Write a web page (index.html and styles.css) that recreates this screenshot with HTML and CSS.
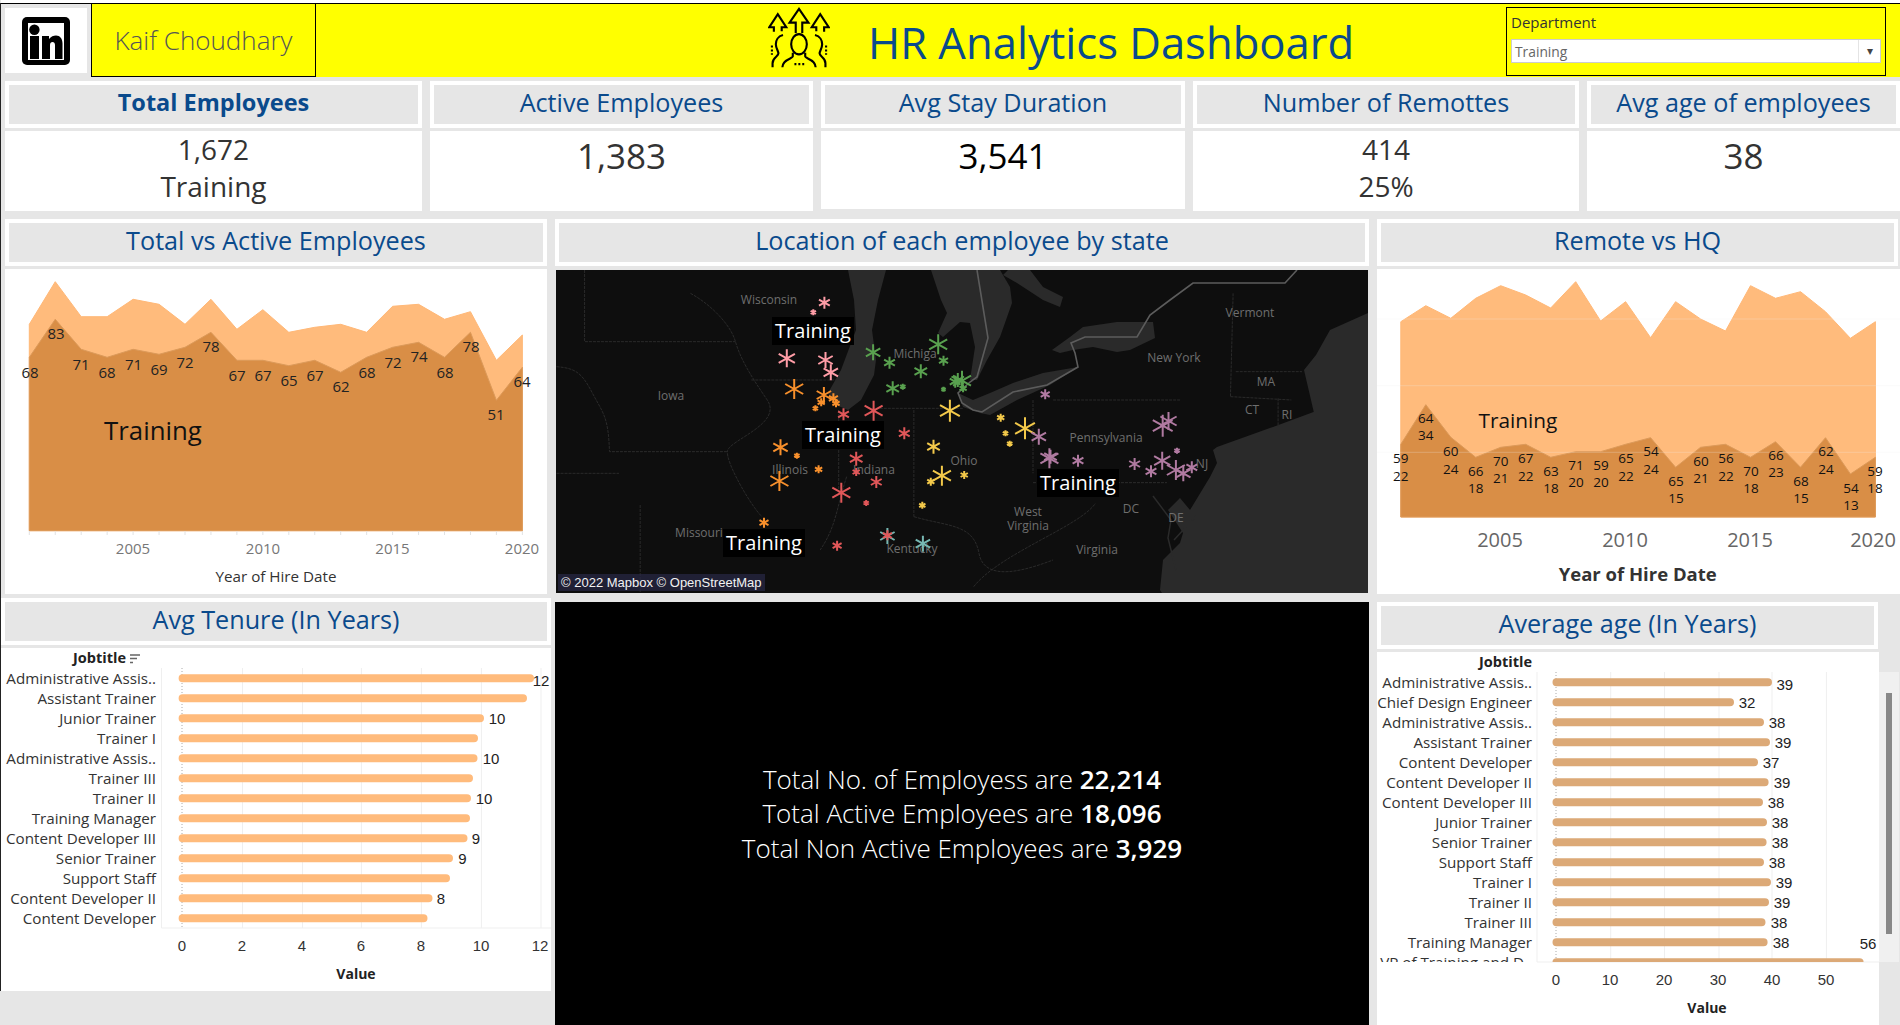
FILE: index.html
```html
<!DOCTYPE html>
<html lang="en">
<head>
<meta charset="utf-8">
<title>HR Analytics Dashboard</title>
<link rel="stylesheet" href="styles.css">
</head>
<body>
<div class="dash">
  <header class="top">
    <div class="logo-cell">
      <div class="logo-box">
        <svg class="logo" viewBox="0 0 48 48" aria-label="LinkedIn">
          <rect width="48" height="48" rx="5" fill="#000"/>
          <rect x="6" y="6" width="36" height="37" fill="#fff"/>
          <circle cx="12.4" cy="12.8" r="5.2" fill="#000"/>
          <rect x="8" y="19" width="9" height="23" fill="#000"/>
          <path d="M20 19h7v3c2-2.500 4.500-3.500 7-3.500 4 0 6.500 3 6.500 8V42H33V28c0-2-1-3-2.500-3S28 26 28 28v14h-8z" fill="#000"/>
        </svg>
      </div>
    </div>
    <div class="author">Kaif Choudhary</div>
    <div class="banner">
      <svg class="hr-icon" viewBox="50 20 190 190" aria-hidden="true">
        <g fill="none" stroke="#000" stroke-width="6.500" stroke-linejoin="miter">
          <path d="M135 100V68h-19l29-42 29 42h-19v32"/>
          <path d="M68 96V82H54l26-40 26 40H92v12"/>
          <path d="M222 96V82h14l-26-40-26 40h14v12"/>
          <ellipse cx="145" cy="134" rx="24" ry="31"/>
          <path d="M126 160v12c0 6-32 8-32 33"/>
          <path d="M164 160v12c0 6 32 8 32 33"/>
          <path d="M96 106c-16 4-22 18-22 28 0 12 8 22 8 28 0 10-18 12-18 30v13"/>
          <path d="M194 106c16 4 22 18 22 28 0 12-8 22-8 28 0 10 18 12 18 30v13"/>
          <path d="M62 138v28M228 138v28" stroke-dasharray="6 6"/>
          <path d="M131 195h30" stroke-dasharray="6 6"/>
        </g>
      </svg>
      <h1 class="main-title">HR Analytics Dashboard</h1>
      <div class="filter">
        <div class="filter-label">Department</div>
        <div class="select"><span class="select-value">Training</span><span class="select-arrow">▾</span></div>
      </div>
    </div>
  </header>

  <section class="kpis">
    <div class="kpi">
      <div class="head"><h2 class="head-in strong">Total Employees</h2></div>
      <div class="kpi-val two"><span>1,672</span><span>Training</span></div>
    </div>
    <div class="kpi">
      <div class="head"><h2 class="head-in">Active Employees</h2></div>
      <div class="kpi-val one">1,383</div>
    </div>
    <div class="kpi">
      <div class="head"><h2 class="head-in">Avg Stay Duration</h2></div>
      <div class="kpi-val one black short">3,541</div>
    </div>
    <div class="kpi">
      <div class="head"><h2 class="head-in">Number of Remottes</h2></div>
      <div class="kpi-val two"><span>414</span><span>25%</span></div>
    </div>
    <div class="kpi">
      <div class="head"><h2 class="head-in">Avg age of employees</h2></div>
      <div class="kpi-val one">38</div>
    </div>
  </section>

  <section class="row-charts">
    <div class="col">
      <div class="head"><h2 class="head-in">Total vs Active Employees</h2></div>
      <div class="panel">
        <svg class="chart" viewBox="0 0 542 325">
          <polygon fill="#ffbb7c" stroke="#ffb877" points="24.300,261.700 24.300,55.300 50.250,12.700 76.200,47.700 102.150,47.700 128.100,30.300 154.050,35.300 180,55.300 205.950,30.300 231.900,60.300 257.850,40.700 283.800,63.300 309.750,58.300 335.700,55.300 361.650,63.300 387.600,37.300 413.550,35.300 439.500,50.300 465.450,42.700 491.400,91.300 517.350,66 517.350,261.700"/>
          <polygon fill="#d98e46" stroke="#dc9a5a" points="24.300,261.700 24.300,88.300 50.250,50.300 76.200,80.300 102.150,88.300 128.100,80.300 154.050,85.300 180,78.300 205.950,63.300 231.900,91.300 257.850,91.300 283.800,96.700 309.750,91.300 335.700,103.300 361.650,88.300 387.600,78.300 413.550,73.300 439.500,88.300 465.450,63.300 491.400,131.300 517.350,98.300 517.350,261.700"/>
          <path class="ticks" d="M24.300 262v4M50.250 262v4M76.200 262v4M102.150 262v4M128.100 262v4M154.050 262v4M180 262v4M205.950 262v4M231.900 262v4M257.850 262v4M283.800 262v4M309.750 262v4M335.700 262v4M361.650 262v4M387.600 262v4M413.550 262v4M439.500 262v4M465.450 262v4M491.400 262v4M517.350 262v4"/>
          <g class="lbl-a">
            <text x="25" y="108.700">68</text><text x="51" y="70.300">83</text><text x="76" y="100.700">71</text><text x="102" y="108.700">68</text><text x="128.600" y="100.700">71</text><text x="154" y="105.700">69</text><text x="180" y="98.700">72</text><text x="206" y="83.300">78</text><text x="232" y="111.700">67</text><text x="258" y="111.700">67</text><text x="284" y="116.700">65</text><text x="310" y="111.700">67</text><text x="336" y="123.300">62</text><text x="362" y="108.700">68</text><text x="388" y="98.700">72</text><text x="414" y="93.300">74</text><text x="440" y="108.700">68</text><text x="466" y="83.300">78</text><text x="491" y="151.300">51</text><text x="517" y="118.300">64</text>
          </g>
          <text class="tag-a" x="148" y="171">Training</text>
          <g class="axis-a">
            <text x="128" y="285">2005</text><text x="258" y="285">2010</text><text x="387.500" y="285">2015</text><text x="517" y="285">2020</text>
          </g>
          <text class="axis-t-a" x="271" y="312.500">Year of Hire Date</text>
        </svg>
      </div>
    </div>

    <div class="col">
      <div class="head"><h2 class="head-in">Location of each employee by state</h2></div>
      <div class="panel map-panel">
        <div class="map">
          <svg class="chart" viewBox="0 0 812 323">
            <defs>
              <path id="m" class="star" d="M0-1V1M-.9-.5L.9.500M-.9.500L.9-.5"/>
            </defs>
            <rect width="812" height="323" fill="#0e0e0e"/>
            <g fill="#2a2a2a">
              <path d="M292 0L298 30 300 60 285 100 272 123 280 135 292 140 305 130 318 105 320 90 316 60 322 30 330 0z"/>
              <path d="M375 0L385 30 391 43 382 63 387 67 404 52 414 53 419 77 414 110 421 110 431 90 444 67 456 33 454 17 444 0z"/>
              <path d="M447 5L461 13 487 30 504 37 507 27 487 17 474 0 452 0z"/>
              <path d="M402 123L407 137 424 143 434 145 461 130 494 115 522 97 487 103 457 113 434 123 417 130z"/>
              <path d="M496 80L514 67 527 57 561 52 597 52 599 68 574 80 561 82 537 77 517 80 504 83z"/>
              <path d="M812 43L774 60 760 85 748 100 755 130 758 143 771 137 717 157 661 177 657 180 661 193 654 207 634 240 624 228 612 240 627 263 624 273 607 290 604 320 606 323 812 323z"/>
            </g>
            <path class="border" d="M421 0L432 68 421 107 414 112 402 123 406 133 417 140 426 142 457 122 491 115 522 97 519 83 515 73 529 67 581 67 594 45 614 30 637 13 729 13 741 0"/>
            <g transform="scale(.5294 .3333) translate(-11 -30)" class="states">
              <path d="M65 30V245H350M380 360H540M12 320C50 325 60 340 80 400S110 470 112 575H335M545 450V700M600 445H780M687 450V770M912 420V640M950 420H1190M912 668H1165M1290 100L1285 410M1295 335H1420M1285 410L1400 420M1375 415V500M170 735V1000M12 640H130"/>
              <path d="M265 100C300 130 340 190 350 245S380 350 410 420 340 540 335 572 380 740 400 770M560 650C540 750 540 800 510 870M687 770C750 800 800 790 810 880S900 930 950 900M800 980C850 880 1000 800 1030 730"/>
            </g>
            <path class="river" d="M597 226L615 250 612 268 620 300M640 246L618 270"/>
            <g class="place">
              <text x="213" y="34">Wisconsin</text><text x="115" y="130">Iowa</text><text x="359" y="88">Michiga</text><text x="694" y="47">Vermont</text><text x="618" y="92">New York</text><text x="710" y="116">MA</text><text x="696" y="144">CT</text><text x="731" y="149">RI</text><text x="646" y="198">NJ</text><text x="550" y="172">Pennsylvania</text><text x="408" y="195">Ohio</text><text x="234" y="204">Illinois</text><text x="318" y="204">Indiana</text><text x="143" y="267">Missouri</text><text x="472" y="246">West</text><text x="472" y="260">Virginia</text><text x="575" y="243">DC</text><text x="620" y="252">DE</text><text x="541" y="284">Virginia</text><text x="356" y="283">Kentucky</text>
            </g>
            <g class="pink">
              <use href="#m" transform="translate(268.400 32.700) scale(6)"/><use href="#m" transform="translate(257.300 42.300) scale(3)"/><use href="#m" transform="translate(230.800 88.300) scale(9)"/><use href="#m" transform="translate(269.500 90) scale(8)"/><use href="#m" transform="translate(274.800 102.300) scale(8)"/>
            </g>
            <g class="orange">
              <use href="#m" transform="translate(238.200 119) scale(10)"/><use href="#m" transform="translate(267.900 125) scale(8)"/><use href="#m" transform="translate(277.400 128.300) scale(5)"/><use href="#m" transform="translate(280 133.300) scale(4)"/><use href="#m" transform="translate(265.200 132.300) scale(4)"/><use href="#m" transform="translate(259.400 138.300) scale(3)"/><use href="#m" transform="translate(224.500 177.300) scale(8)"/><use href="#m" transform="translate(240.900 185.700) scale(3)"/><use href="#m" transform="translate(262.600 199.300) scale(4)"/><use href="#m" transform="translate(223.400 211) scale(10)"/><use href="#m" transform="translate(208 252.700) scale(5)"/>
            </g>
            <g class="teal">
              <use href="#m" transform="translate(331.400 266) scale(8)"/><use href="#m" transform="translate(366.900 273.700) scale(8)"/>
            </g>
            <g class="red">
              <use href="#m" transform="translate(287.500 144.300) scale(6)"/><use href="#m" transform="translate(317.600 140.700) scale(10)"/><use href="#m" transform="translate(348.300 163.300) scale(6)"/><use href="#m" transform="translate(300.200 188.700) scale(7)"/><use href="#m" transform="translate(300.200 202) scale(4)"/><use href="#m" transform="translate(320.300 212) scale(6)"/><use href="#m" transform="translate(285.300 222.700) scale(10)"/><use href="#m" transform="translate(310.200 233) scale(3)"/><use href="#m" transform="translate(281.100 275.700) scale(5)"/><use href="#m" transform="translate(331.400 265.300) scale(5)"/>
            </g>
            <g class="green">
              <use href="#m" transform="translate(317.100 82.300) scale(8)"/><use href="#m" transform="translate(333.500 92.700) scale(6)"/><use href="#m" transform="translate(382.200 74.300) scale(10)"/><use href="#m" transform="translate(387.500 90.700) scale(5)"/><use href="#m" transform="translate(364.800 101.300) scale(7)"/><use href="#m" transform="translate(336.700 118.300) scale(7)"/><use href="#m" transform="translate(346.800 116.700) scale(3)"/><use href="#m" transform="translate(387.500 119.300) scale(2.500)"/><use href="#m" transform="translate(401.800 110) scale(7)"/><use href="#m" transform="translate(406 110.700) scale(10)"/><use href="#m" transform="translate(399.200 111.700) scale(6)"/><use href="#m" transform="translate(407.100 118.300) scale(4)"/>
            </g>
            <g class="yellow">
              <use href="#m" transform="translate(393.900 140.700) scale(11)"/><use href="#m" transform="translate(444.700 147.700) scale(4)"/><use href="#m" transform="translate(469 158.300) scale(11)"/><use href="#m" transform="translate(449.500 163.300) scale(3)"/><use href="#m" transform="translate(453.700 173.700) scale(3)"/><use href="#m" transform="translate(377.500 176.700) scale(7)"/><use href="#m" transform="translate(385.900 205.700) scale(10)"/><use href="#m" transform="translate(408.200 205) scale(4)"/><use href="#m" transform="translate(374.800 211.700) scale(4)"/><use href="#m" transform="translate(366.300 235.300) scale(3.500)"/>
            </g>
            <g class="purple">
              <use href="#m" transform="translate(489.200 124.300) scale(5)"/><use href="#m" transform="translate(482.800 166.700) scale(8)"/><use href="#m" transform="translate(493.400 188.300) scale(10)"/><use href="#m" transform="translate(494.500 186.700) scale(7)"/><use href="#m" transform="translate(522 190.700) scale(6)"/><use href="#m" transform="translate(612.500 151) scale(9)"/><use href="#m" transform="translate(606.700 155.700) scale(11)"/><use href="#m" transform="translate(621 180.700) scale(3)"/><use href="#m" transform="translate(578.600 194) scale(6)"/><use href="#m" transform="translate(606.200 190.700) scale(9)"/><use href="#m" transform="translate(595 201.300) scale(6)"/><use href="#m" transform="translate(619.900 200) scale(10)"/><use href="#m" transform="translate(627.300 203.300) scale(8)"/><use href="#m" transform="translate(635.800 197.300) scale(6)"/>
            </g>
            <g class="map-tag-bg">
              <rect x="216" y="47" width="82" height="28"/><rect x="246" y="151" width="82" height="28"/><rect x="481" y="199" width="82" height="28"/><rect x="167" y="259" width="82" height="28"/>
            </g>
            <g class="map-tag">
              <text x="257" y="67.500">Training</text><text x="287" y="171.500">Training</text><text x="522" y="219.500">Training</text><text x="208" y="279.500">Training</text>
            </g>
          </svg>
          <div class="credit">© 2022 Mapbox © OpenStreetMap</div>
        </div>
      </div>
    </div>

    <div class="col col-right">
      <div class="head"><h2 class="head-in">Remote vs HQ</h2></div>
      <div class="panel">
        <svg class="chart" viewBox="0 0 523 325">
          <polygon fill="#ffbb7c" stroke="#ffb877" points="23.800,248 23.800,52.700 48.800,36.700 73.800,49.300 98.700,29.300 123.700,16.700 148.700,26 173.700,39 198.700,12.700 223.600,52 248.600,32.700 273.600,68.700 298.600,32.700 323.600,50 348.500,62 373.500,16.700 398.500,29.300 423.500,22.700 448.500,42.700 473.400,69.300 498.400,52.700 498.400,248"/>
          <polygon fill="#d98e46" stroke="#dc9a5a" points="23.800,248 23.800,175.300 48.800,135.700 73.800,168.300 98.700,188.300 123.700,178.300 148.700,175.300 173.700,188.300 198.700,182.700 223.600,182.700 248.600,175.300 273.600,168.700 298.600,198.300 323.600,178.300 348.500,175.300 373.500,188.300 398.500,172.700 423.500,198.300 448.500,168.700 473.400,205 498.400,188.300 498.400,248"/>
          <path class="grid-r" d="M0 50H523M0 116.700H523M0 183.300H523"/>
          <g class="lbl-b">
            <text x="23.800" y="194.300">59</text><text x="23.800" y="211.700">22</text>
            <text x="48.800" y="154.300">64</text><text x="48.800" y="171.300">34</text>
            <text x="73.800" y="187.300">60</text><text x="73.800" y="204.700">24</text>
            <text x="98.800" y="207.300">66</text><text x="98.800" y="224.300">18</text>
            <text x="123.800" y="197.300">70</text><text x="123.800" y="214.300">21</text>
            <text x="148.800" y="194.300">67</text><text x="148.800" y="211.700">22</text>
            <text x="173.900" y="207.300">63</text><text x="173.900" y="224.300">18</text>
            <text x="198.900" y="201.300">71</text><text x="198.900" y="218.300">20</text>
            <text x="223.900" y="201.300">59</text><text x="223.900" y="218.300">20</text>
            <text x="248.900" y="194.300">65</text><text x="248.900" y="211.700">22</text>
            <text x="273.900" y="187.300">54</text><text x="273.900" y="204.700">24</text>
            <text x="299" y="217.300">65</text><text x="299" y="234.300">15</text>
            <text x="324" y="197.300">60</text><text x="324" y="214.300">21</text>
            <text x="349" y="194.300">56</text><text x="349" y="211.700">22</text>
            <text x="374" y="207.300">70</text><text x="374" y="224.300">18</text>
            <text x="399" y="191">66</text><text x="399" y="208.300">23</text>
            <text x="424" y="217.300">68</text><text x="424" y="234.300">15</text>
            <text x="449" y="187.300">62</text><text x="449" y="204.700">24</text>
            <text x="474" y="224.300">54</text><text x="474" y="241.300">13</text>
            <text x="498" y="207.300">59</text><text x="498" y="224.300">18</text>
          </g>
          <text class="tag-b" x="141" y="158.700">Training</text>
          <g class="axis-b">
            <text x="123" y="278">2005</text><text x="248" y="278">2010</text><text x="373" y="278">2015</text><text x="496" y="278">2020</text>
          </g>
          <text class="axis-t-b" x="260.700" y="312">Year of Hire Date</text>
        </svg>
      </div>
    </div>
  </section>

  <section class="row-bottom">
    <div class="col-left">
      <div class="head"><h2 class="head-in">Avg Tenure (In Years)</h2></div>
      <div class="bars-left">
        <svg class="chart" viewBox="0 0 550 343">
          <path class="plot" d="M160.500 20V280H550M241.500 20V280M301.500 20V280M360.400 20V280M420.400 20V280M480.400 20V280M540 20V280"/>
          <path class="zero" d="M181 20V280"/>
          <text class="bar-h" x="125" y="15">Jobtitle</text>
          <path class="sort" d="M129 7H139M129 10.500H136M129 14.500H132"/>
          <g class="bar-n">
            <text x="155" y="36.300">Administrative Assis..</text><text x="155" y="56.300">Assistant Trainer</text><text x="155" y="76.300">Junior Trainer</text><text x="155" y="96.300">Trainer I</text><text x="155" y="116.300">Administrative Assis..</text><text x="155" y="136.300">Trainer III</text><text x="155" y="156.300">Trainer II</text><text x="155" y="176.300">Training Manager</text><text x="155" y="196.300">Content Developer III</text><text x="155" y="216.300">Senior Trainer</text><text x="155" y="236.300">Support Staff</text><text x="155" y="256.300">Content Developer II</text><text x="155" y="276.300">Content Developer</text>
          </g>
          <g class="bar-l">
            <path d="M181.600 30.300H529M181.600 50.300H522M181.600 70.300H479M181.600 90.300H473M181.600 110.300H472.500M181.600 130.300H468M181.600 150.300H466M181.600 170.300H465M181.600 190.300H462.500M181.600 210.300H448M181.600 230.300H445M181.600 250.300H427.500M181.600 270.300H422.500"/>
          </g>
          <g class="num">
            <text x="540" y="38">12</text><text x="496" y="75.500">10</text><text x="490" y="115.500">10</text><text x="483" y="155.500">10</text><text x="475" y="195.500">9</text><text x="461.500" y="215.500">9</text><text x="440" y="255.500">8</text>
          </g>
          <g class="num tick">
            <text x="181" y="303">0</text><text x="241" y="303">2</text><text x="301" y="303">4</text><text x="360" y="303">6</text><text x="420" y="303">8</text><text x="480" y="303">10</text><text x="539" y="303">12</text>
          </g>
          <text class="bar-v" x="355" y="331">Value</text>
        </svg>
      </div>
    </div>

    <div class="note">
      <p class="note-line">Total No. of Employess are <b class="note-num">22,214</b></p>
      <p class="note-line">Total Active Employees are <b class="note-num">18,096</b></p>
      <p class="note-line">Total Non Active Employees are <b class="note-num">3,929</b></p>
    </div>

    <div class="col-age">
      <div class="head"><h2 class="head-in">Average age (In Years)</h2></div>
      <div class="bars-right">
        <svg class="chart" viewBox="0 0 502 373">
          <defs><clipPath id="plotclip"><rect width="520" height="310"/></clipPath></defs>
          <path class="plot" d="M160 20V310H502M233.700 20V310M287.500 20V310M342 20V310M395 20V310M449.400 20V310"/>
          <path class="zero" d="M179 20V310"/>
          <text class="bar-h" x="155" y="15">Jobtitle</text>
          <g clip-path="url(#plotclip)">
            <g class="bar-n">
              <text x="155" y="36.300">Administrative Assis..</text><text x="155" y="56.300">Chief Design Engineer</text><text x="155" y="76.300">Administrative Assis..</text><text x="155" y="96.300">Assistant Trainer</text><text x="155" y="116.300">Content Developer</text><text x="155" y="136.300">Content Developer II</text><text x="155" y="156.300">Content Developer III</text><text x="155" y="176.300">Junior Trainer</text><text x="155" y="196.300">Senior Trainer</text><text x="155" y="216.300">Support Staff</text><text x="155" y="236.300">Trainer I</text><text x="155" y="256.300">Trainer II</text><text x="155" y="276.300">Trainer III</text><text x="155" y="296.300">Training Manager</text><text x="155" y="316.300">VP of Training and D..</text>
            </g>
            <g class="bar-r">
              <path d="M179.500 30.300H391M179.500 50.300H353M179.500 70.300H383M179.500 90.300H389M179.500 110.300H377M179.500 130.300H387.600M179.500 150.300H382M179.500 170.300H386M179.500 190.300H385.600M179.500 210.300H383M179.500 230.300H390M179.500 250.300H388M179.500 270.300H384.500M179.500 290.300H386.600M179.500 310.300H482.600"/>
            </g>
          </g>
          <g class="num">
            <text x="407.800" y="37.500">39</text><text x="370" y="55.500">32</text><text x="400" y="75.500">38</text><text x="406" y="95.500">39</text><text x="394" y="115.500">37</text><text x="405" y="135.500">39</text><text x="399" y="155.500">38</text><text x="403" y="175.500">38</text><text x="403" y="195.500">38</text><text x="400" y="215.500">38</text><text x="407" y="235.500">39</text><text x="405" y="255.500">39</text><text x="402" y="275.500">38</text><text x="404" y="295.500">38</text><text x="491" y="296.500">56</text>
          </g>
          <g class="num tick">
            <text x="179" y="332.700">0</text><text x="233" y="332.700">10</text><text x="287" y="332.700">20</text><text x="341" y="332.700">30</text><text x="395" y="332.700">40</text><text x="449" y="332.700">50</text>
          </g>
          <text class="bar-v" x="330" y="360.700">Value</text>
        </svg>
        <div class="scroll"><div class="thumb"></div></div>
      </div>
    </div>
  </section>
</div>
</body>
</html>
```

FILE: styles.css
```css
* { box-sizing: border-box; }
html, body { margin: 0; padding: 0; }
body { background: #e6e6e6; font-family: "Open Sans", "Noto Sans", sans-serif; overflow: hidden; }

.dash { position: relative; width: 1900px; height: 1025px; padding-left: 1px; display: flex; flex-direction: column; overflow: hidden; }
.dash::before { content: ""; position: absolute; left: 0; top: 3px; width: 1px; height: 988px; background: #222; }

/* header */
.top { margin-top: 0; height: 77px; padding-top: 3px; background: #fff; display: flex; flex: none; position: relative; }
.top::after { content: ""; position: absolute; left: 0; right: 0; top: 3px; height: 1px; background: #000; }
.logo-cell { width: 90px; background: #e6e6e6; padding: 5px 4px 4px; }
.logo-box { height: 65px; width: 82px; background: #fff; display: flex; align-items: center; justify-content: center; }
.logo { width: 48px; height: 48px; display: block; }
.author { width: 225px; background: #ff0; border: 1px solid #000; display: flex; align-items: center; justify-content: center; font-size: 26px; font-weight: 300; color: #555; }
.banner { flex: 1; background: #ff0; display: flex; align-items: flex-start; padding-left: 452px; border-top: 1px solid #000; }
.hr-icon { width: 62px; height: 62px; flex: none; margin-top: 3px; display: block; }
.main-title { margin: 0 0 0 38px; font-size: 43.600px; font-weight: 400; line-height: 76px; height: 72px; color: #0a4a8c; white-space: nowrap; width: 520px; }
.filter { margin-left: 118px; margin-top: 3px; width: 380px; height: 69px; border: 1px solid #000; padding: 4px 4px 0; flex: none; }
.filter-label { font-size: 15px; line-height: 20px; color: #333; }
.select { margin-top: 7px; height: 24px; background: #fff; border: 1px solid #ccc; display: flex; align-items: center; justify-content: space-between; font-size: 13.800px; color: #666; }
.select-value { padding-left: 3px; }
.select-arrow { width: 22px; height: 100%; border-left: 1px solid #e4e4e4; text-align: center; color: #444; font-size: 12px; line-height: 22px; }

/* titles */
.head { height: 47px; background: #fff; padding: 4px; flex: none; }
.head-in { margin: 0; height: 100%; padding-bottom: 5px; background: #e6e6e6; display: flex; align-items: center; justify-content: center; font-size: 25.200px; font-weight: 400; color: #0a4a8c; white-space: nowrap; }
.strong { font-weight: 700; font-size: 23.500px; }

/* kpis */
.kpis { margin-top: 4px; padding-left: 4px; display: grid; grid-template-columns: 417px 383px 364px 386px 313px; column-gap: 8px; height: 130px; flex: none; }
.kpi { display: flex; flex-direction: column; gap: 3px; }
.kpi-val { flex: 1; background: #fff; color: #333; display: flex; flex-direction: column; align-items: center; }
.one { font-size: 35px; line-height: 36px; padding-top: 7px; }
.two { font-size: 28px; line-height: 36.500px; padding-top: 0; }
.black { color: #000; }
.short { margin-bottom: 2px; }

/* middle row */
.row-charts { margin-top: 8px; padding-left: 4px; display: grid; grid-template-columns: 542px 814px 523px; column-gap: 8px; height: 375px; flex: none; }
.col { display: flex; flex-direction: column; gap: 3px; min-width: 0; }
.col-right .head { margin-right: 2px; }
.panel { flex: 1; background: #fff; position: relative; min-height: 0; }
.map-panel { background: #e6e6e6; padding: 1px; }
.map { position: relative; height: 100%; background: #0e0e0e; overflow: hidden; }
.chart { display: block; width: 100%; height: 100%; overflow: hidden; font-family: "Open Sans", "Noto Sans", sans-serif; }
.credit { position: absolute; left: 2px; bottom: 2px; height: 17px; line-height: 17px; padding: 0 3px; background: rgba(40, 40, 70, .7); color: #f2f2f2; font-family: "Liberation Sans", Arial, sans-serif; font-size: 13px; white-space: nowrap; }

.ticks { stroke: #e2e2e2; fill: none; }
.lbl-a text { font-size: 15px; fill: #222; text-anchor: middle; }
.tag-a { font-size: 25.800px; fill: #111; text-anchor: middle; }
.axis-a text { font-size: 15px; fill: #777; text-anchor: middle; }
.axis-t-a { font-size: 15.200px; fill: #333; text-anchor: middle; }
.lbl-b text { font-size: 13.500px; fill: #111; text-anchor: middle; }
.tag-b { font-size: 20.800px; font-weight: 500; fill: #111; text-anchor: middle; }
.axis-b text { font-size: 20px; fill: #666; text-anchor: middle; }
.axis-t-b { font-size: 18.500px; font-weight: 700; fill: #333; text-anchor: middle; }
.grid-r { stroke: rgba(240, 240, 240, .25); fill: none; }

/* map */
.border { fill: none; stroke: #5c5c5c; stroke-width: 1.600; }
.states path { fill: none; stroke: #2a2a2a; stroke-dasharray: 3 1; vector-effect: non-scaling-stroke; }
.river { fill: none; stroke: #2a2a2a; stroke-width: 1.500; }
.place text { font-size: 12px; fill: #6e6e6e; text-anchor: middle; }
.star { fill: none; stroke-width: 2; stroke-linecap: butt; vector-effect: non-scaling-stroke; }
.pink { stroke: #ff9da7; }
.orange { stroke: #f8902c; }
.red { stroke: #e15759; }
.green { stroke: #59a14f; }
.yellow { stroke: #f3c94a; }
.purple { stroke: #b07aa1; }
.teal { stroke: #76b7b2; }
.map-tag-bg rect { fill: #000; }
.map-tag text { font-size: 20px; fill: #fff; text-anchor: middle; }

/* bottom row */
.row-bottom { margin-top: 4px; display: flex; flex: 1; min-height: 0; }
.col-left { width: 550px; display: flex; flex-direction: column; gap: 3px; flex: none; }
.bars-left { height: 343px; background: #fff; }
.note { width: 814px; margin: 4px 8px 0 4px; flex: none; background: #000; color: #fff; display: flex; flex-direction: column; align-items: center; justify-content: center; }
.note-line { margin: 0; font-size: 26px; line-height: 34.500px; font-weight: 300; white-space: nowrap; }
.note-num { font-weight: 600; }
.col-age { width: 502px; margin-top: 4px; display: flex; flex-direction: column; gap: 3px; flex: none; }
.col-age .head { margin-right: 1px; }
.bars-right { flex: 1; background: #fff; position: relative; }
.scroll { position: absolute; left: 502px; top: 20px; width: 20px; height: 290px; background: #f0f0f0; }
.thumb { margin: 21px 0 0 7px; width: 6px; height: 241px; background: #888; }

.plot { fill: none; stroke: #efefef; }
.zero { fill: none; stroke: #aaa; stroke-dasharray: 1 2; }
.bar-h { font-size: 14.500px; font-weight: 700; fill: #222; text-anchor: end; }
.sort { fill: none; stroke: #666; stroke-width: 1.500; }
.bar-n text { font-size: 15.200px; fill: #333; text-anchor: end; }
.bar-l path { fill: none; stroke: #ffbb7c; stroke-width: 8; stroke-linecap: round; }
.bar-r path { fill: none; stroke: #dca977; stroke-width: 8; stroke-linecap: round; }
.num text { font-family: "Liberation Sans", Arial, sans-serif; font-size: 15px; fill: #222; text-anchor: middle; }
.tick text { fill: #333; }
.bar-v { font-size: 14px; font-weight: 700; fill: #222; text-anchor: middle; }
```
